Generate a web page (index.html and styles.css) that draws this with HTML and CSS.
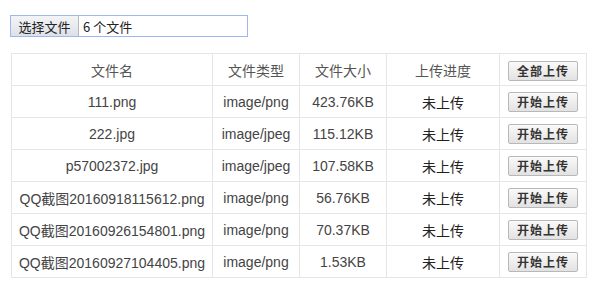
FILE: index.html
```html
<!DOCTYPE html>
<html lang="zh-CN">
<head>
<meta charset="utf-8">
<title>上传</title>
<link rel="stylesheet" href="styles.css">
</head>
<body>
<div class="page">
  <div class="file-input">
    <span class="file-btn">选择文件</span>
    <span class="file-text">6 个文件</span>
  </div>
  <table class="files">
    <colgroup>
      <col class="c1"><col class="c2"><col class="c3"><col class="c4"><col class="c5">
    </colgroup>
    <thead>
      <tr><th>文件名</th><th>文件类型</th><th>文件大小</th><th>上传进度</th><th><button class="btn">全部上传</button></th></tr>
    </thead>
    <tbody>
      <tr><td>111.png</td><td>image/png</td><td>423.76KB</td><td class="cn">未上传</td><td><button class="btn">开始上传</button></td></tr>
      <tr><td>222.jpg</td><td>image/jpeg</td><td>115.12KB</td><td class="cn">未上传</td><td><button class="btn">开始上传</button></td></tr>
      <tr><td>p57002372.jpg</td><td>image/jpeg</td><td>107.58KB</td><td class="cn">未上传</td><td><button class="btn">开始上传</button></td></tr>
      <tr><td>QQ截图20160918115612.png</td><td>image/png</td><td>56.76KB</td><td class="cn">未上传</td><td><button class="btn">开始上传</button></td></tr>
      <tr><td>QQ截图20160926154801.png</td><td>image/png</td><td>70.37KB</td><td class="cn">未上传</td><td><button class="btn">开始上传</button></td></tr>
      <tr><td>QQ截图20160927104405.png</td><td>image/png</td><td>1.53KB</td><td class="cn">未上传</td><td><button class="btn">开始上传</button></td></tr>
    </tbody>
  </table>
</div>
</body>
</html>
```
FILE: styles.css
```css
html, body {
  margin: 0;
  padding: 0;
  background: #fff;
}
.page {
  padding: 15px 0 0 10px;
  font-family: "Liberation Sans", "Noto Sans CJK SC", sans-serif;
  color: #333;
}
.file-input {
  display: flex;
  align-items: center;
  width: 236px;
  height: 20px;
  border: 1px solid #9fb6f0;
  box-sizing: content-box;
  font-size: 13px;
}
.file-btn {
  display: flex;
  align-items: center;
  height: 20px;
  width: 68px;
  box-sizing: border-box;
  justify-content: center;
  border-right: 1px solid #b5b9c4;
  background: linear-gradient(#f3f4f6, #dde1e8);
  color: #222;
  font-family: "Noto Sans CJK SC", sans-serif;
  font-size: 13px;
}
.file-text {
  padding-left: 4px;
  color: #222;
  font-family: "Noto Sans CJK SC", sans-serif;
}
.files {
  margin-top: 16px;
  margin-left: 1px;
  border-collapse: collapse;
  width: 575px;
  table-layout: fixed;
  font-size: 14px;
}
.c1 { width: 201px; }
.c2 { width: 87px; }
.c3 { width: 87px; }
.c4 { width: 113px; }
.c5 { width: 87px; }
.files th, .files td {
  border: 1px solid #e6e6e6;
  height: 31px;
  padding: 0;
  text-align: center;
  font-weight: normal;
  color: #444;
  white-space: nowrap;
}
.files th {
  font-family: "Noto Sans CJK SC", sans-serif;
  color: #555;
}
.files td.cn {
  font-family: "Noto Sans CJK SC", sans-serif;
  color: #222;
}
.btn {
  width: 70px;
  height: 20px;
  padding: 0;
  border: 1px solid #b8b8b8;
  border-radius: 2px;
  background: linear-gradient(#fafafa, #e2e2e2);
  font-family: "Noto Sans CJK SC", sans-serif;
  font-size: 12px;
  font-weight: bold;
  letter-spacing: 1px;
  color: #333;
  vertical-align: middle;
}
```
